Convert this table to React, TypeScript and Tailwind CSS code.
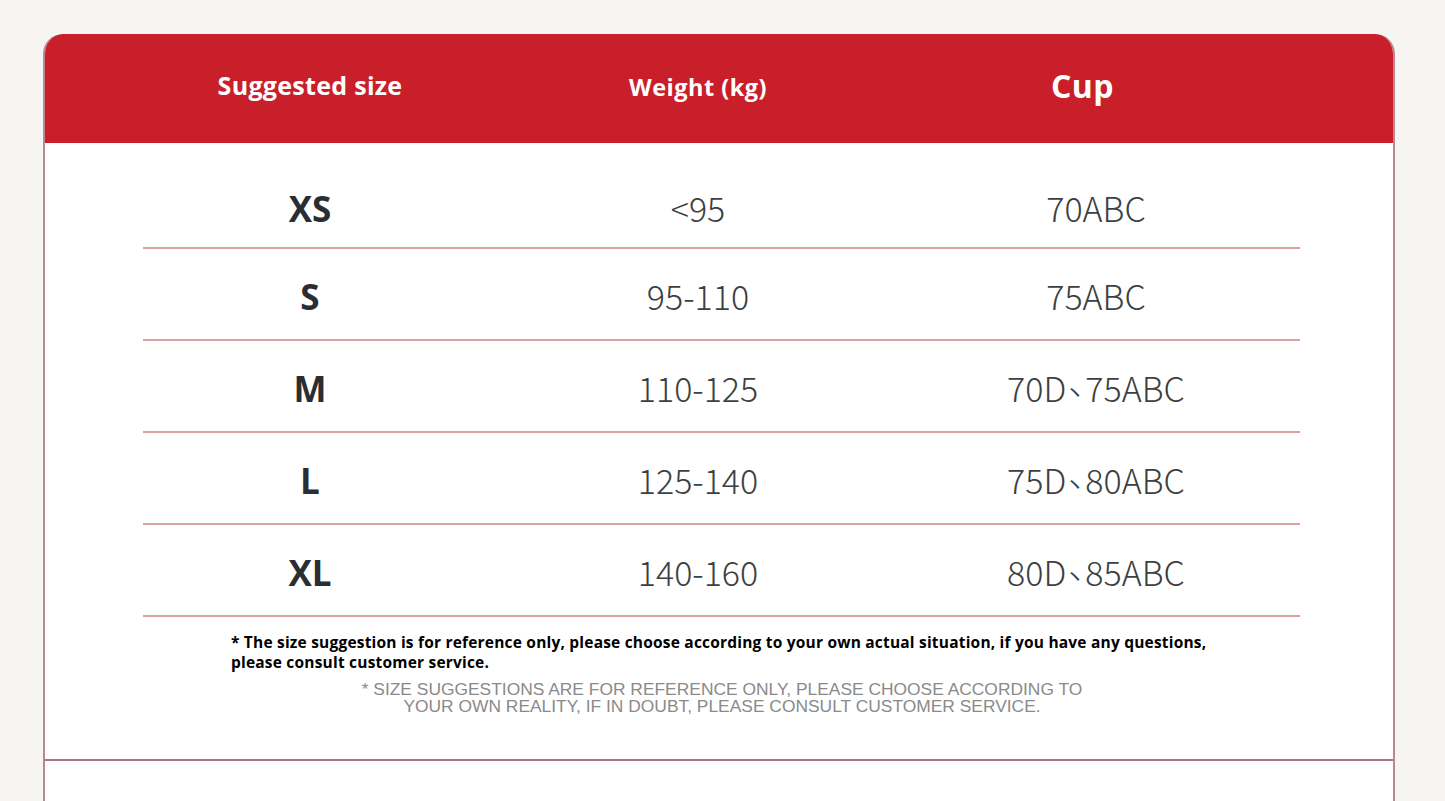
const ROWS = [
  { size: 'XS', weight: '<95', cup: ['70ABC'] },
  { size: 'S', weight: '95-110', cup: ['75ABC'] },
  { size: 'M', weight: '110-125', cup: ['70D', '75ABC'] },
  { size: 'L', weight: '125-140', cup: ['75D', '80ABC'] },
  { size: 'XL', weight: '140-160', cup: ['80D', '85ABC'] },
]

const openSans = { fontFamily: '"Open Sans", "Noto Sans", sans-serif' }
const light = { fontFamily: '"Noto Sans CJK SC", "Noto Sans", sans-serif' }

export default function App() {
  return (
    <div className="min-h-[801px] w-full overflow-hidden bg-[#f6f5f3] pt-[34px] pl-[43px] pr-[50px]">
      <div className="rounded-t-[20px] overflow-hidden border-x-2 border-[#b98890] bg-white">
        {/* header */}
        <div
          className="grid h-[109px] grid-cols-[334px_442px_381px] items-center bg-[#c81f2a] pl-[98px] pr-[93px] text-white font-bold"
          style={openSans}
        >
          <div className="text-center text-[25px] tracking-[0.3px] -mt-[5px]">Suggested size</div>
          <div className="text-center text-[23.5px] tracking-[0.5px] -mt-[2px]">Weight (kg)</div>
          <div className="pr-[54px] text-center text-[32px] tracking-[0.5px] -mt-[6px]">Cup</div>
        </div>

        {/* rows */}
        <div className="pl-[98px] pr-[93px] pt-[26px]">
          {ROWS.map(r => (
            <div
              key={r.size}
              className="grid h-[92px] grid-cols-[334px_442px_381px] items-center border-b-2 border-[#d9a3a6] first:h-[80px] first:pb-[4px]"
            >
              <div className="text-center text-[35px] font-bold text-[#2a2e33] pt-[6px]" style={openSans}>
                {r.size}
              </div>
              <div className="text-center text-[34px] font-light text-[#3d3f42] pt-[2px]" style={light}>
                {r.weight}
              </div>
              <div className="pr-[27px] text-center text-[34px] font-light text-[#3d3f42] pt-[2px]" style={light}>
                {r.cup[0]}
                {r.cup[1] && (
                  <>
                    <span className="inline-block ml-[2px] -translate-y-[7px] [font-feature-settings:'halt']">、</span>
                    {r.cup[1]}
                  </>
                )}
              </div>
            </div>
          ))}
        </div>

        {/* notes */}
        <div className="pl-[186px] pr-[150px] pt-[15px] pb-[44px]">
          <p className="max-w-[990px] text-[15.5px] font-bold leading-[20px] tracking-[0.2px] text-black" style={openSans}>
            * The size suggestion is for reference only, please choose according to your own actual situation, if you have any questions, please consult customer service.
          </p>
          <p
            className="mt-[9px] pr-[30px] text-center text-[17.4px] leading-[17px] text-[#8a8a8a]"
            style={{ fontFamily: '"Liberation Sans", Arial, sans-serif' }}
          >
            * SIZE SUGGESTIONS ARE FOR REFERENCE ONLY, PLEASE CHOOSE ACCORDING TO
            <br />
            YOUR OWN REALITY, IF IN DOUBT, PLEASE CONSULT CUSTOMER SERVICE.
          </p>
        </div>

        <div className="h-[60px] border-t-2 border-[#a8767d] bg-white" />
      </div>
    </div>
  )
}
